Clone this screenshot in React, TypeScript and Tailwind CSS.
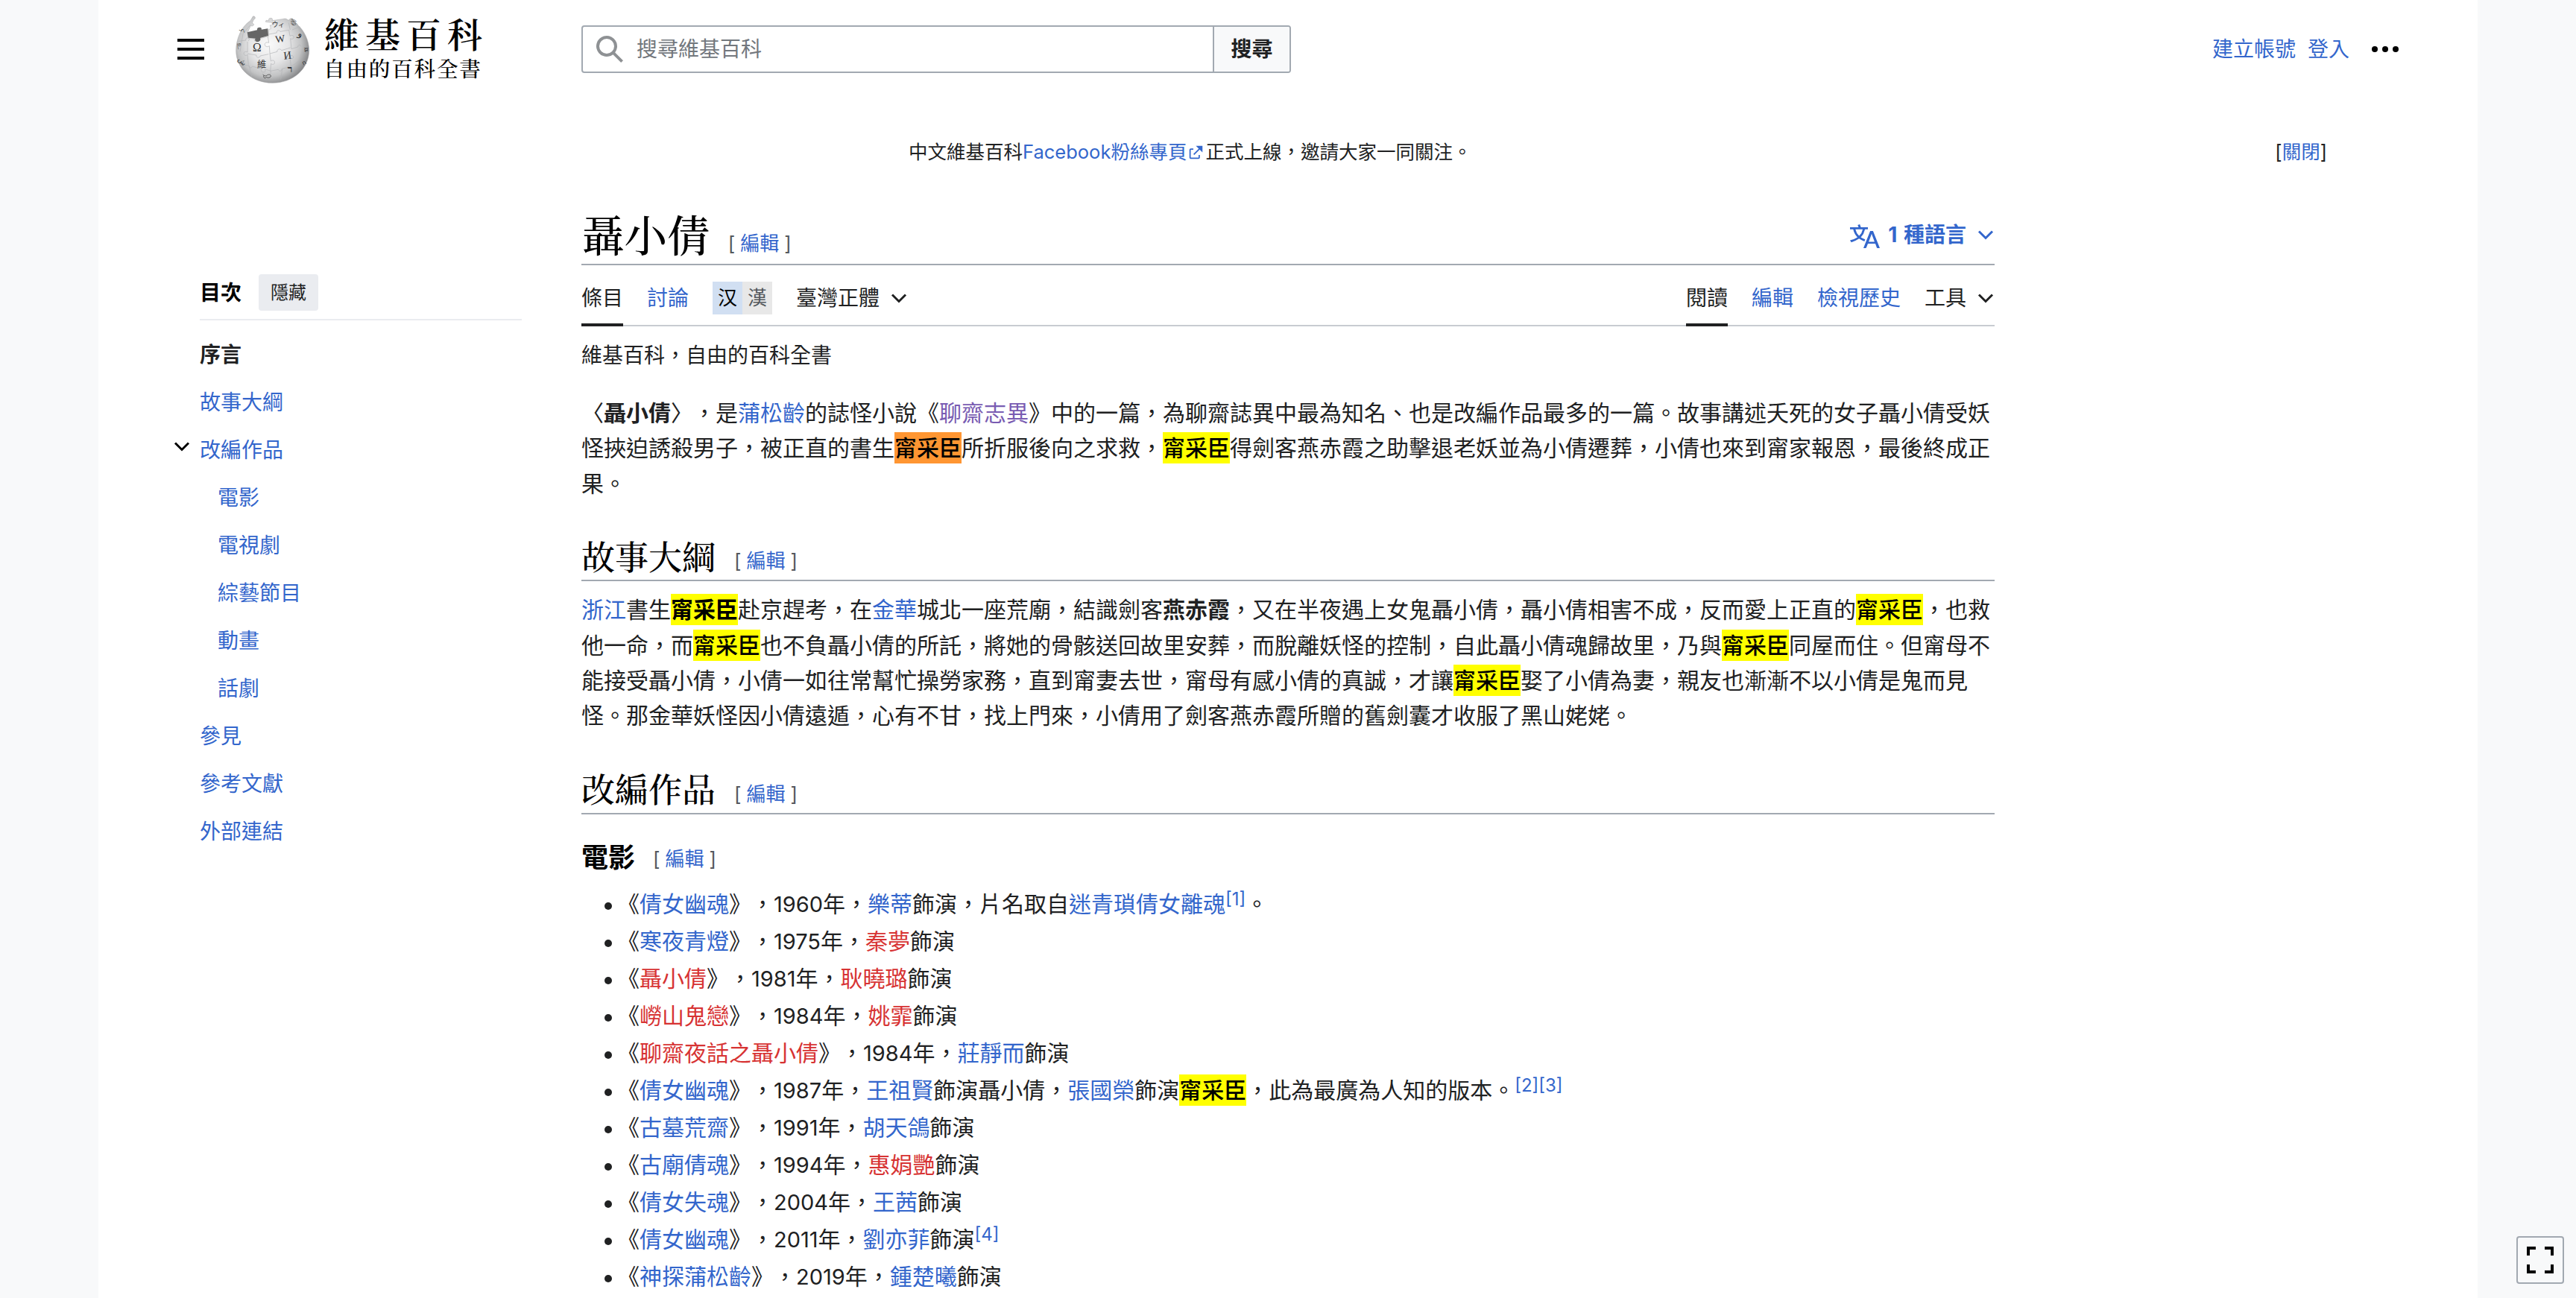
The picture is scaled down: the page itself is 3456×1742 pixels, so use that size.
import type { ReactNode } from "react";

const link = "text-[#3366cc]";
const red = "text-[#d73333]";

function A({ children, tone = "blue" }: { children: ReactNode; tone?: "blue" | "red" | "visited" }) {
  const color = tone === "red" ? red : tone === "visited" ? "text-[#795cb2]" : link;
  return <a className={color}>{children}</a>;
}

function Mark({ active = false, bold = false }: { active?: boolean; bold?: boolean }) {
  return (
    <mark
      className={`inline-block leading-[42px] text-black ${active ? "bg-[#ff9632]" : "bg-[#ffff00]"} ${bold ? "font-bold" : "font-medium"}`}
    >
      甯采臣
    </mark>
  );
}

function Chevron({ className = "" }: { className?: string }) {
  return (
    <svg viewBox="0 0 24 24" className={`h-6 w-6 shrink-0 ${className}`} fill="none" stroke="currentColor" strokeWidth="3">
      <path d="M3 6.5l9 9 9-9" />
    </svg>
  );
}

function EditLink({ className = "" }: { className?: string }) {
  return (
    <span className={`flex text-[26px] leading-[36px] text-[#54595d] ${className}`}>
      <span>[</span>
      <a className="mx-[7px] text-[#3366cc]">編輯</a>
      <span>]</span>
    </span>
  );
}

function SectionHeading({ title, className = "" }: { title: string; className?: string }) {
  return (
    <div className={`flex h-[62px] items-center border-b-2 border-[#a2a9b1] ${className}`}>
      <h2 className="pt-[3px] font-['Liberation_Serif','Noto_Serif_CJK_TC','Noto_Sans_CJK_TC',serif] text-[45px] leading-[56px] font-medium text-black">
        {title}
      </h2>
      <EditLink className="ml-[25px] pt-[10px]" />
    </div>
  );
}

function Globe() {
  return (
    <svg viewBox="30 25 300 273" className="h-[91px] w-[100px]">
      <defs>
        <radialGradient id="ball" gradientUnits="userSpaceOnUse" cx="165" cy="140" r="172">
          <stop offset="0" stopColor="#fafafa" />
          <stop offset="0.45" stopColor="#e6e6e7" />
          <stop offset="0.75" stopColor="#c2c3c4" />
          <stop offset="1" stopColor="#7d7e80" />
        </radialGradient>
      </defs>
      <path
        d="M100 28c6-2 10 2 9 8l-7 7-5 12c7 2 9 7 4 10-4 3-8 2-10 0L80 90l3 8-4 8 1 10 26 2c-2 8 2 13 10 13s12-6 9-13l38-10V81l9-3-3-15c6 2 9 0 9-5s-5-7-11-6l-16-2 2-6 12 1c-4-5 0-10 7-10s9 6 5 10l40-6c8-1 10-3 17-1l10 6c4-9 13-10 18-5l5 12c12 6 12 8 14 12 25 22 45 62 45 101 0 75-64 132-147 132S32 239 32 165C32 120 53 68 90 45z"
        fill="url(#ball)"
        stroke="#a6a7a9"
        strokeWidth="1.5"
      />
      <path
        d="M77 92l40-9c-1-8 3-11 10-11s9 5 7 9l26-4 2 29-33 9c4 8-2 15-10 15s-14-6-9-13l-29-3z"
        fill="#666"
      />
      <g fill="none" stroke="#b2b4b6" strokeWidth="2">
        <path d="M40 128l32-4c-4-9 8-13 12-7 3 5-1 8-3 10M78 130v42c-10-5-17 0-14 8s12 6 14 2l4 40M78 178l36 6c-3 11 14 13 15 3l34-7" />
        <path d="M160 108l4 26c-10-4-18 1-16 9s11 9 18 4l2 31 30-8c-3-10 13-15 17-5l36-11" />
        <path d="M164 100l32-6c-3-9 10-13 14-5l35-6 4 24c10-7 18 0 15 7s-9 6-13 3l4 42 26-8c0-10 12-10 12-2" />
        <path d="M168 178l4 30c10-7 18 0 15 8s-10 6-14 2l-3 30 32-6c4 9 14 7 15-3l36-9-3-33c10 4 15-2 12-8s-10-4-13-1" />
        <path d="M52 222l32 4c-1 10 10 12 14 3l36 11c-3 9 3 15 12 12 5-2 5-7 2-12l24 8-4 30M84 226l12 46M218 240l-6 42M253 230l32-22M90 62l-30 36-12 72M250 82l-6-28M290 70l-32 12" />
      </g>
      <g fill="#303133" className="font-['Liberation_Serif','Noto_Sans_CJK_TC',serif]">
        <text x="99" y="170" fontSize="47">Ω</text>
        <text x="190" y="132" fontSize="41" transform="rotate(-8 210 118)">W</text>
        <text x="223" y="199" fontSize="44" transform="rotate(-7 240 184)">И</text>
        <text x="117" y="236" fontSize="37">維</text>
        <text x="176" y="70" fontSize="26">ウィ</text>
        <text x="239" y="254" fontSize="40" fontWeight="bold">ר</text>
        <text x="284" y="110" fontSize="36" transform="rotate(20 292 98)">و</text>
        <text x="50" y="92" fontSize="28" transform="rotate(-60 60 82)">ל</text>
        <text x="40" y="156" fontSize="28" transform="rotate(80 50 144)">உ</text>
        <text x="44" y="212" fontSize="28" transform="rotate(50 54 202)">ش</text>
        <text x="252" y="64" fontSize="28">ঊ</text>
        <text x="306" y="168" fontSize="22">झ</text>
        <text x="298" y="222" fontSize="26" transform="rotate(-30 306 212)">ก</text>
      </g>
      <path d="M140 262c6 6 12 8 18 2 8-4 16 0 14 6-4 6-14 6-18 2-4 10-14 2-10-6" fill="none" stroke="#444" strokeWidth="2.5" />
    </svg>
  );
}

function Header() {
  return (
    <header className="flex h-[132px] items-center pl-[106px] pr-[104px]">
      <div className="flex w-9 flex-col gap-2">
        <span className="h-1 bg-black" />
        <span className="h-1 bg-black" />
        <span className="h-1 bg-black" />
      </div>
      <div className="ml-[42px] flex w-[464px] items-center">
        <Globe />
        <div className="ml-[18px] flex flex-col pt-[3px] whitespace-nowrap text-black">
          <span className="pl-px font-['Liberation_Serif','Noto_Serif_CJK_TC','Noto_Sans_CJK_TC',serif] text-[47px] leading-[52px] font-semibold tracking-[8px]">
            維基百科
          </span>
          <span className="pt-px font-['Liberation_Serif','Noto_Serif_CJK_TC','Noto_Sans_CJK_TC',serif] text-[28.6px] leading-[38px] font-medium tracking-[1.8px]">
            自由的百科全書
          </span>
        </div>
      </div>
      <div className="flex h-16 w-[952px] overflow-hidden rounded-[4px] border-2 border-[#a2a9b1]">
        <div className="flex flex-1 items-center pl-[16px]">
          <svg viewBox="0 0 20 20" className="h-10 w-10" fill="#8e9194">
            <path d="M12.2 13.6a7 7 0 1 1 1.4-1.4l5.4 5.4-1.4 1.4zM3 8a5 5 0 1 0 10 0A5 5 0 0 0 3 8" />
          </svg>
          <span className="ml-[16px] text-[28px] leading-[40px] text-[#72777d]">搜尋維基百科</span>
        </div>
        <button className="w-[103px] border-l-2 border-[#a2a9b1] bg-[#f8f9fa] text-[28px] font-bold text-[#202122]">
          搜尋
        </button>
      </div>
      <nav className="ml-auto flex items-center text-[28px] leading-[40px]">
        <A>建立帳號</A>
        <span className="w-4" />
        <A>登入</A>
        <span className="ml-[28px] flex gap-[6px] px-[2px]">
          <span className="h-2 w-2 rounded-full bg-black" />
          <span className="h-2 w-2 rounded-full bg-black" />
          <span className="h-2 w-2 rounded-full bg-black" />
        </span>
      </nav>
    </header>
  );
}

function SiteNotice() {
  return (
    <div className="flex h-[144px] items-center whitespace-nowrap pl-[1087px] pr-[202px] text-[25.5px] leading-[40px] text-[#202122]">
      <span className="flex items-center">
        中文維基百科
        <A>Facebook粉絲專頁</A>
        <svg viewBox="0 0 12 12" className="mr-[2px] ml-[2px] h-[21px] w-[21px]" fill="#3366cc">
          <path d="M6 1h5v5L8.86 3.85 4.7 8 4 7.3l4.15-4.16zM2 3h2v1H2v6h6V8h1v2a1 1 0 0 1-1 1H2a1 1 0 0 1-1-1V4a1 1 0 0 1 1-1" />
        </svg>
        正式上線，邀請大家一同關注。
      </span>
      <span className="ml-auto">
        [<A>關閉</A>]
      </span>
    </div>
  );
}

const tocItems: { label: string; sub?: boolean; open?: boolean }[] = [
  { label: "故事大綱" },
  { label: "改編作品", open: true },
  { label: "電影", sub: true },
  { label: "電視劇", sub: true },
  { label: "綜藝節目", sub: true },
  { label: "動畫", sub: true },
  { label: "話劇", sub: true },
  { label: "參見" },
  { label: "參考文獻" },
  { label: "外部連結" },
];

function Toc() {
  return (
    <aside className="ml-[96px] w-[472px] pt-[92px] text-[28px]">
      <div className="ml-[40px] flex h-[62px] border-b-2 border-[#eaecf0] leading-[49px]">
        <h2 className="pt-px font-bold text-black">目次</h2>
        <button className="ml-[23px] h-[49px] w-20 rounded-[4px] bg-[#eaecf0] text-[24px] text-[#202122]">隱藏</button>
      </div>
      <ul className="mt-[14px]">
        <li className="h-16 pl-[40px] leading-[64px] font-bold text-[#202122]">序言</li>
        {tocItems.map((item) => (
          <li
            key={item.label}
            className={`flex h-16 items-center leading-[64px] text-[#3366cc] ${item.sub ? "pl-[64px]" : item.open ? "pl-[4px]" : "pl-[40px]"}`}
          >
            {item.open && <Chevron className="-mt-[8px] mr-[12px] text-black" />}
            {item.label}
          </li>
        ))}
      </ul>
    </aside>
  );
}

function TitleBar() {
  return (
    <div className="flex h-20 border-b-2 border-[#a2a9b1]">
      <h1 className="pt-[8px] font-['Liberation_Serif','Noto_Serif_CJK_TC','Noto_Sans_CJK_TC',serif] text-[57.6px] leading-[70px] font-medium text-black">
        聶小倩
      </h1>
      <EditLink className="ml-[24px] pt-[33px]" />
      <div className="ml-auto flex h-[78px] items-start pt-[19px] text-[28px] leading-[40px] font-bold text-[#3366cc]">
        <svg viewBox="0 0 20 20" className="mt-[2px] mr-[11px] h-10 w-10" fill="currentColor">
          <path d="M20 18h-1.44a.6.6 0 0 1-.4-.12.8.8 0 0 1-.23-.31L17 15h-5l-1 2.54a.8.8 0 0 1-.22.3.6.6 0 0 1-.4.14H9l4.55-11.47h1.89zm-3.53-4.31L14.89 9.5a12 12 0 0 1-.39-1.24q-.09.37-.19.69l-.19.56-1.58 4.19zm-6.3-1.58a13.4 13.4 0 0 1-2.91-1.41 11.46 11.46 0 0 0 2.81-5.37H12V4H7.31a4 4 0 0 0-.2-.56C6.87 2.79 6.6 2 6.6 2l-1.47.5s.4.89.6 1.5H0v1.33h2.15A11.23 11.23 0 0 0 5 10.7a17.2 17.2 0 0 1-5 2.1q.56.82.87 1.38a23.3 23.3 0 0 0 5.22-2.51 15.6 15.6 0 0 0 3.56 1.77zM3.63 5.33h4.91a8.1 8.1 0 0 1-2.45 4.45 9.1 9.1 0 0 1-2.46-4.45" />
        </svg>
        <span className="[word-spacing:2px]">1 種語言</span>
        <Chevron className="mt-[9px] ml-[14px]" />
      </div>
    </div>
  );
}

function Tabs() {
  return (
    <div className="flex h-[82px] border-b-2 border-[#c8ccd1] text-[28px] leading-[80px] text-[#202122]">
      <span className="h-[82px] border-b-4 border-[#202122] pt-[4px]">條目</span>
      <span className="ml-8 pt-[4px] text-[#3366cc]">討論</span>
      <span className="mt-[22px] ml-8 flex h-[44px] text-center text-[26px] leading-[44px]">
        <span className="w-10 bg-[#d1dff2] text-black">汉</span>
        <span className="w-10 bg-[#e8e8e8] text-[#54595d]">漢</span>
      </span>
      <span className="ml-8 pt-[4px]">臺灣正體</span>
      <Chevron className="mt-[33px] ml-[14px]" />
      <span className="ml-auto h-[82px] border-b-4 border-[#202122] pt-[4px]">閱讀</span>
      <span className="ml-8 pt-[4px] text-[#3366cc]">編輯</span>
      <span className="ml-8 pt-[4px] text-[#3366cc]">檢視歷史</span>
      <span className="ml-8 pt-[4px]">工具</span>
      <Chevron className="mt-[33px] ml-[14px]" />
    </div>
  );
}

function Ref({ children }: { children: ReactNode }) {
  return <sup className="relative top-[-9px] align-baseline text-[24px] leading-none text-[#3366cc]">{children}</sup>;
}

type Film = { title: string; missing?: boolean; year: string; rest: ReactNode };

const films: Film[] = [
  {
    title: "倩女幽魂",
    year: "1960",
    rest: (
      <>
        <A>樂蒂</A>飾演，片名取自<A>迷青瑣倩女離魂</A>
        <Ref>[1]</Ref>。
      </>
    ),
  },
  { title: "寒夜青燈", year: "1975", rest: <><A tone="red">秦夢</A>飾演</> },
  { title: "聶小倩", missing: true, year: "1981", rest: <><A tone="red">耿曉璐</A>飾演</> },
  { title: "嶗山鬼戀", missing: true, year: "1984", rest: <><A tone="red">姚霏</A>飾演</> },
  { title: "聊齋夜話之聶小倩", missing: true, year: "1984", rest: <><A>莊靜而</A>飾演</> },
  {
    title: "倩女幽魂",
    year: "1987",
    rest: (
      <>
        <A>王祖賢</A>飾演聶小倩，<A>張國榮</A>飾演<Mark />，此為最廣為人知的版本。<Ref>[2][3]</Ref>
      </>
    ),
  },
  { title: "古墓荒齋", year: "1991", rest: <><A>胡天鴿</A>飾演</> },
  { title: "古廟倩魂", year: "1994", rest: <><A tone="red">惠娟艷</A>飾演</> },
  { title: "倩女失魂", year: "2004", rest: <><A>王茜</A>飾演</> },
  { title: "倩女幽魂", year: "2011", rest: <><A>劉亦菲</A>飾演<Ref>[4]</Ref></> },
  { title: "神探蒲松齡", year: "2019", rest: <><A>鍾楚曦</A>飾演</> },
];

function Article() {
  return (
    <main className="w-[1896px] text-[30px] leading-[47.4px] text-[#202122]">
      <TitleBar />
      <Tabs />
      <p className="mt-[17px] text-[28px] leading-[44px]">維基百科，自由的百科全書</p>
      <p className="mt-[32px]">
        〈<b>聶小倩</b>〉，是<A>蒲松齡</A>的誌怪小說《<A tone="visited">聊齋志異</A>
        》中的一篇，為聊齋誌異中最為知名、也是改編作品最多的一篇。故事講述夭死的女子聶小倩受妖怪挾迫誘殺男子，被正直的書生
        <Mark active />
        所折服後向之求救，
        <Mark />
        得劍客燕赤霞之助擊退老妖並為小倩遷葬，小倩也來到甯家報恩，最後終成正果。
      </p>
      <SectionHeading title="故事大綱" className="mt-[45px]" />
      <p className="mt-[15px]">
        <A>浙江</A>書生
        <Mark bold />
        赴京趕考，在<A>金華</A>城北一座荒廟，結識劍客<b>燕赤霞</b>
        ，又在半夜遇上女鬼聶小倩，聶小倩相害不成，反而愛上正直的
        <Mark />
        ，也救他一命，而
        <Mark />
        也不負聶小倩的所託，將她的骨骸送回故里安葬，而脫離妖怪的控制，自此聶小倩魂歸故里，乃與
        <Mark />
        同屋而住。但甯母不能接受聶小倩，小倩一如往常幫忙操勞家務，直到甯妻去世，甯母有感小倩的真誠，才讓
        <Mark />
        娶了小倩為妻，親友也漸漸不以小倩是鬼而見怪。那金華妖怪因小倩遠遁，心有不甘，找上門來，小倩用了劍客燕赤霞所贈的舊劍囊才收服了黑山姥姥。
      </p>
      <SectionHeading title="改編作品" className="mt-[46px]" />
      <div className="mt-[34px] flex h-12 items-center">
        <h3 className="text-[36px] leading-[48px] font-bold text-black">電影</h3>
        <EditLink className="ml-[24px] pt-[5px]" />
      </div>
      <ul className="mt-[13px]">
        {films.map((f) => (
          <li key={f.title + f.year} className="flex h-[50.07px] leading-[50px] whitespace-nowrap">
            <span className="mt-[23px] mr-[7px] ml-[31px] h-[10px] w-[10px] shrink-0 rounded-full bg-[#202122]" />
            <span>
              《<A tone={f.missing ? "red" : "blue"}>{f.title}</A>》，
              <span className="font-['Inter'] text-[29px]">{f.year}</span>年，{f.rest}
            </span>
          </li>
        ))}
      </ul>
    </main>
  );
}

export default function App() {
  return (
    <div
      lang="zh-Hant-TW"
      className="h-[1742px] overflow-hidden bg-[#f8f9fa] font-['Inter','Noto_Sans_CJK_TC',sans-serif] [text-spacing-trim:space-all]"
    >
      <div className="mx-auto h-full w-[3192px] bg-white">
        <Header />
        <SiteNotice />
        <div className="flex">
          <Toc />
          <div className="w-[80px]" />
          <Article />
        </div>
      </div>
      <button className="fixed right-[16px] bottom-[19px] flex h-16 w-16 items-center justify-center rounded-[4px] border-2 border-[#a2a9b1] bg-[#f8f9fa]">
        <svg viewBox="0 0 36 36" className="h-9 w-9" fill="none" stroke="#000" strokeWidth="4">
          <path d="M2 12V2h10M24 2h10v10M34 24v10H24M12 34H2V24" />
        </svg>
      </button>
    </div>
  );
}
